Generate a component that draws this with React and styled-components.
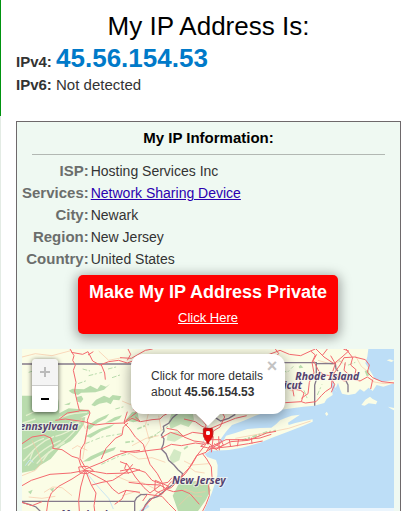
import styled, { createGlobalStyle } from "styled-components";

const details = [
  { label: "ISP:", value: "Hosting Services Inc" },
  { label: "Services:", value: "Network Sharing Device", href: "#services" },
  { label: "City:", value: "Newark" },
  { label: "Region:", value: "New Jersey" },
  { label: "Country:", value: "United States" },
];

export default function App() {
  return (
    <Page>
      <GlobalStyle />
      <Rail />
      <Content>
        <Title>My IP Address Is:</Title>
        <Address>
          <strong>IPv4:</strong> <AddressLink href="#ipv4">45.56.154.53</AddressLink>
        </Address>
        <Address>
          <strong>IPv6:</strong> Not detected
        </Address>
        <Card>
          <CardTitle>My IP Information:</CardTitle>
          <Details>
            <tbody>
              {details.map(({ label, value, href }) => (
                <tr key={label}>
                  <th scope="row">{label}</th>
                  <td>{href ? <a href={href}>{value}</a> : value}</td>
                </tr>
              ))}
            </tbody>
          </Details>
          <PrivateButton href="#private">
            <strong>Make My IP Address Private</strong>
            <span>Click Here</span>
          </PrivateButton>
          <Map>
            <MapDrawing />
            <ZoomControl>
              <ZoomButton type="button" aria-label="Zoom in" disabled>
                <svg viewBox="0 0 12 12" width="12" height="12" aria-hidden="true">
                  <path d="M6 1V11M1 6H11" stroke="currentColor" strokeWidth="2" />
                </svg>
              </ZoomButton>
              <ZoomButton type="button" aria-label="Zoom out">
                <svg viewBox="0 0 12 12" width="12" height="12" aria-hidden="true">
                  <path d="M2 6H10" stroke="currentColor" strokeWidth="2" />
                </svg>
              </ZoomButton>
            </ZoomControl>
            <Popup>
              <PopupTip />
              <PopupBody>
                Click for more details
                <br />
                about <strong>45.56.154.53</strong>
                <CloseButton type="button" aria-label="Close popup">
                  ×
                </CloseButton>
              </PopupBody>
            </Popup>
            <Attribution />
          </Map>
        </Card>
      </Content>
    </Page>
  );
}

function MapDrawing() {
  return (
    <MapSvg viewBox="0 0 1116 525" preserveAspectRatio="xMidYMin slice" aria-hidden="true">
      <defs>
        <clipPath id="land">
          <path id="mainland" d="M0 0H1039L1036 23L1030 43L1049 73L1059 91L1084 98L1116 93V103L1084 113L1064 108L1052 126L1040 116L1026 128L1014 120L1000 134L979 138L960 134L954 120L948 101L941 118L934 97L927 104L932 138L914 150L907 162L877 170L844 173L794 180L740 187L700 200L665 215L630 228L612 248L598 268L585 288L566 296L560 308L548 314L556 324L582 333L587 349L586 378L579 403L569 433L556 463L546 486L540 525H0Z" />
        </clipPath>
      </defs>
      <rect width="1116" height="525" fill="#bddef7" />

      {/* land and islands */}
      <g fill="#fbfde6">
        <use href="#mainland" />
        <path d="M568 300L590 286L604 276L612 260L640 252L676 240L714 237L748 236L762 226L774 214L790 207L809 200L834 197L818 208L798 221L800 228L820 222L846 216L872 211V218L844 230L794 250L754 265L714 281L660 296L620 303L574 305Z" />
        <path d="M1018 168L1030 152L1044 143L1052 150L1066 157L1062 166L1040 163L1028 170Z" />
        <path d="M1098 173L1116 177V184L1108 180Z" />
        <path d="M909 194L914 188L919 196L914 201Z" />
        <path d="M1094 34L1104 31L1116 35L1108 39Z" />
        <path d="M955 112L960 104L964 116L958 126Z" />
      </g>

      {/* forest */}
      <g clipPath="url(#land)" fill="#b9dcad">
        <path d="M0 140H106L110 158L112 193L140 178L176 181L204 185L202 194L176 206L154 210L190 204L186 226L166 254L146 276L118 292L98 316L86 330L56 348L38 364L0 371Z" />
        <path d="M140 125L152 119L186 121L205 110L226 121L236 107L252 113L264 105L246 122L220 130L178 131L168 138L150 133Z" />
        <path d="M222 152L246 140L262 147L272 138L298 142L292 154L274 152L266 166L254 160L232 164L218 172L208 168Z" />
        <path d="M162 145L178 140L184 150L176 161L168 158Z" />
        <path d="M126 167L146 160L142 168Z" />
        <path d="M192 234L226 210L262 194L252 208L226 222L202 242Z" />
        <path d="M190 262L232 240L278 225L264 236L238 246L206 266Z" />
        <path d="M250 221L278 205L300 199L292 209L268 220Z" />
        <path d="M182 338L206 322L246 304L282 294L276 304L238 318L202 336Z" />
        <path d="M310 214L330 190L346 188L352 216L334 220Z" />
        <path d="M448 196L474 182L512 190L516 212L500 234L476 226L446 240L440 218Z" opacity=".8" />
        <path d="M438 252L470 246L486 262L458 278L434 274Z" opacity=".6" />
        <path d="M442 326L456 300L478 310L472 334L450 344Z" opacity=".6" />
        <path d="M470 404L520 396L556 398L566 424L552 452L530 484L480 525L466 480L452 440Z" />
        <path d="M374 58L390 52L396 62L386 72Z" />
        <path d="M830 53L836 47L844 56L832 58Z" />
        <path d="M1028 66L1038 62L1044 78L1034 82Z" />
        <path d="M18 428L32 422L26 436Z" />
        <path d="M84 420L96 416L92 430Z" />
      </g>
      <g fill="none" stroke="#e5f1cf" strokeWidth="4">
        <path d="M4 336C26 316 44 282 96 262" />
        <path d="M18 350C36 326 58 300 116 274" />
        <path d="M44 344C60 322 82 306 128 280" />
        <path d="M80 312C100 290 138 276 162 240" />
        <path d="M4 300C26 290 40 276 66 268" />
        <path d="M12 200C38 188 60 174 96 166M2 222L40 210" />
        <path d="M96 240C126 240 154 226 180 214" />
        <path d="M100 262C126 256 154 240 176 224" />
        <path d="M112 206C140 196 154 192 196 190" />
        <path d="M24 330L34 304M62 336L82 308" />
      </g>
      <g fill="none" stroke="#b9dcad" strokeWidth="3" strokeDasharray="14 5 6 8">
        <path d="M200 80L240 70M270 86L300 76M168 104L196 94M280 180L310 172" />
        <path d="M190 284L240 264L300 254M326 164L344 150" />
        <path d="M238 346L290 322L330 312M404 254L438 232" />
        <path d="M400 60L434 46M754 80L776 62L796 70L814 52M862 94L878 66M886 138L900 106" />
        <path d="M950 34L974 50L1000 40M1000 76L1012 96M846 124L858 154" />
        <path d="M660 274L734 250L762 245" strokeWidth="6" />
        <path d="M20 70L46 62M60 92L88 84M30 112L70 104M182 60L204 66M258 60L290 52" />
        <path d="M346 240L380 226M380 268L406 256M310 280L340 276M486 300L500 290" strokeWidth="5" />
      </g>
      <g fill="none" stroke="#c9e5f3" strokeWidth="3">
        <path d="M188 364L212 394L236 422L260 448L274 480" />
        <path d="M380 470L356 486L340 525" strokeWidth="8" />
        <path d="M10 350L24 332L34 340" />
        <path d="M538 292L548 270L560 224" />
        <path d="M934 97L936 120L944 128" />
      </g>

      {/* secondary roads */}
      <g fill="none" stroke="#f7c5a4" strokeWidth="2">
        <path d="M0 380L40 364L60 340L48 310L30 274M66 430L92 414L120 416L150 440" />
        <path d="M196 304L166 290L150 300M196 240L190 280L182 330M20 444L60 448L100 442" />
        <path d="M280 380L318 396L360 400L400 420M300 440L340 428L370 440" />
        <path d="M330 290L372 268L410 260M320 312L350 330L390 326L430 340" />
        <path d="M382 182L370 230L382 274L360 310M410 200L418 246" />
        <path d="M498 352L520 368L548 372M500 390L540 410L560 392M486 420L520 432L550 428" />
        <path d="M470 470L500 440L540 442M486 336L510 348L560 344M640 268L740 250L800 238L866 216" />
        <path d="M744 130L776 110L810 126L840 100M888 34L930 46L962 34M1000 20L1018 52L1040 70" />
        <path d="M0 24L40 14L90 20L150 4M230 6L260 34L300 26M176 204L190 240" />
        <path d="M1052 98L1086 104L1116 101M300 156L352 178" />
      </g>

      {/* state borders */}
      <g fill="none" stroke="#857a8b" strokeWidth="4">
        <path d="M0 45H370M0 457H338" />
        <path d="M0 460L24 467L42 474L58 490M338 457L344 446L356 437L376 436M338 457V525" />
        <path d="M468 193L452 206L440 223L424 232L426 246L418 258L426 270L424 286L418 300L432 314L440 334L456 348L468 362L482 374L476 392L450 408L430 424L408 442L384 450L370 468L360 490" />
        <path d="M560 193L580 206L596 216L620 208L640 196" />
        <path d="M780 41H883V92L878 108V170M883 44L940 43L942 60L948 66M970 92L978 108V130" />
      </g>

      {/* motorways */}
      <g fill="none" stroke="#f4696e" strokeWidth="3" strokeLinejoin="round">
        <path d="M144 0L156 20L152 34L160 48L154 64L162 100L158 126L166 160L172 184L200 184L204 192L196 214L198 226L194 250L188 282L176 302L174 328L190 356" />
        <path d="M148 10L182 16L198 8L212 36L234 48L260 38L290 34L316 42L354 28" />
        <path d="M198 18L214 8M316 34L326 16L318 0M238 48L248 72L250 92" />
        <path d="M100 214L130 210L186 218L220 228L252 224L306 222L330 208L354 218" />
        <path d="M112 210L136 192L172 186M0 284L30 264L66 258L88 268" />
        <path d="M86 266L94 290L92 298L120 302L150 322L170 328L176 348L186 362" />
        <path d="M186 362L240 340L280 320L318 308L354 304" />
        <path d="M0 410L28 394L84 376L146 372L190 364L220 368L254 374L318 372L354 362" />
        <path d="M190 364L150 390L110 412L88 432L78 458L74 486" />
        <path d="M190 364L176 414L170 454L172 486" />
        <path d="M190 364L208 408L222 432L216 470L220 500" />
        <path d="M190 364L224 382L254 398L272 420L290 434L312 424L354 430" />
        <path d="M170 354L196 352L214 364L196 374L174 372Z" />
        <path d="M210 408L240 400L272 394L316 366L332 346M312 424L300 450L278 466" />
        <path d="M238 330L252 298L280 268L300 258L304 234L318 222" />
        <path d="M314 342L308 358L320 374M0 460L30 470L60 458" />
        <path d="M294 26L328 28L370 4L392 0M316 188L306 220L326 204L344 190L334 180" />
        <path d="M306 222L322 238L340 264L364 286L370 306L384 346L406 374L420 400L428 426" />
        <path d="M340 204L356 218L390 212L414 210L424 200L458 182" />
        <path d="M294 306L340 310L384 304L418 300L448 286L478 290L520 282L548 286" />
        <path d="M434 238L466 244L486 264L516 276L548 280" />
        <path d="M418 266L446 250L482 262L512 250L544 254" />
        <path d="M294 366L334 358L370 370L390 394L416 404L438 400L450 386" />
        <path d="M294 338L316 346L340 384L366 416L384 432L416 408" />
        <path d="M320 400L370 406L414 408L434 420L448 416L464 400L490 374L510 346L526 318L548 290L564 270" />
        <path d="M564 290L552 310L524 320L502 356L476 384L446 400L430 420L408 430L380 460L354 490" />
        <path d="M400 394L440 412L420 436L398 424Z" />
        <path d="M540 312L554 330L568 354L570 386L560 410L562 440L552 466L540 490" />
        <path d="M430 420L454 428L480 424L504 434L532 466" />
        <path d="M362 456L376 436L420 442L440 464L462 486" />
        <path d="M570 272L574 246L594 234L608 204L600 190M560 282L548 260L552 228L526 194" />
        <path d="M486 210L520 218L540 232L562 240L600 224L640 208L674 200" />
        <path d="M576 284L594 294L626 278L680 274L734 252L762 247" />
        <path d="M564 294L612 272L668 272L714 267L748 256" />
        <path d="M574 298L630 292L680 284L722 276M622 272L626 294M650 270L646 292M688 266L690 284" />
        <path d="M536 292L566 272L596 272L604 288L584 300L556 296L536 292" />
        <path d="M546 270L586 304M574 262L568 310M552 308L598 280M590 262L592 304" />
        <path d="M704 22L742 16L774 4L802 16L836 20L866 6L880 0" />
        <path d="M746 38L770 14L760 0M866 6L880 18L870 40L876 72L862 100L858 134L838 148" />
        <path d="M790 161L838 158L850 162L882 158L898 140L910 128L928 116L930 92L938 70" />
        <path d="M838 158L846 132L836 124L812 120L816 142M882 0L906 24L936 44L960 24L980 6L964 0" />
        <path d="M884 16L874 34L890 66L908 78L926 80" />
        <path d="M938 70L954 48L966 26L998 24L1030 32L1042 48L1036 70L1052 86L1080 98L1116 102" />
        <path d="M926 20L940 44L932 68L948 84L966 96L990 90L1014 96L1036 84L1054 96" />
        <path d="M972 0L992 26L986 48L1002 62L996 88M970 40L966 64L980 76M938 70L924 84L938 106L928 130" />
        <path d="M1052 92L1046 120M916 0L902 18" />
      </g>

      <g
        fontFamily="'Noto Sans', sans-serif"
        fontSize="31"
        fontWeight="700"
        fontStyle="italic"
        fill="#54426f"
        stroke="#fbfbf2"
        strokeWidth="6"
        strokeOpacity=".7"
        paintOrder="stroke"
      >
        <text x="168" y="244" textAnchor="end">Pennsylvania</text>
        <text x="450" y="406">New Jersey</text>
        <text x="820" y="93">Rhode Island</text>
        <text x="840" y="120" textAnchor="end">Connecticut</text>
        <text x="116" y="508">Maryland</text>
      </g>

      {/* marker */}
      <path d="M544 241Q544 238 547 238H569Q572 238 572 241V258C572 268 561 274 558 286C555 274 544 268 544 258Z" fill="#ea0a0a" stroke="#a80f12" strokeWidth="2" />
      <rect x="552" y="246" width="12" height="12" rx="4" fill="#fff" />
    </MapSvg>
  );
}

const GlobalStyle = createGlobalStyle`
  * {
    box-sizing: border-box;
  }
  body {
    margin: 0;
    background: #fff;
    color: #333;
    font-family: "Liberation Sans", Arial, sans-serif;
    font-size: 15px;
  }
`;

const Page = styled.main`
  display: flex;
  height: 100vh;
  overflow: hidden;
`;

const Rail = styled.div`
  flex: none;
  width: 1px;
  background: #e3ebe4;
  &::before {
    content: "";
    display: block;
    height: 116px;
    background: #00930f;
  }
`;

const Content = styled.div`
  flex: 1;
  min-width: 0;
  padding: 10px 19px 0 15px;
`;

const Title = styled.h1`
  margin: 0;
  color: #000;
  font-size: 26px;
  font-weight: 400;
  line-height: 32px;
  text-align: center;
`;

const Address = styled.p`
  margin: 0;
  line-height: 22px;
`;

const AddressLink = styled.a`
  color: #007ac9;
  font-size: 26px;
  font-weight: 700;
  line-height: 32px;
  text-decoration: none;
`;

const Card = styled.section`
  margin-top: 25px;
  padding: 5px 6px 5px 5px;
  background: #eff9f2;
  border: 1px solid #6e696b;
`;

const CardTitle = styled.h2`
  margin: 0 9px 5px 10px;
  padding-bottom: 5px;
  border-bottom: 1px solid #b2b8b3;
  color: #000;
  font-size: 15px;
  line-height: 22px;
  text-align: center;
`;

const Details = styled.table`
  border-collapse: collapse;
  line-height: 22px;
  th {
    padding: 0 2px 0 0;
    color: #6b6e6c;
    text-align: right;
  }
  td {
    padding: 0;
    font-size: 14px;
  }
  a {
    color: #2a00b0;
  }
`;

const PrivateButton = styled.a`
  display: flex;
  flex-direction: column;
  align-items: center;
  width: fit-content;
  margin: 5px auto 15px;
  padding: 5px 11px 4px;
  background: #f00;
  border-radius: 5px;
  box-shadow: 0 2px 12px 2px rgba(0, 0, 0, 0.35);
  color: #fff;
  line-height: 25px;
  text-decoration: none;
  strong {
    font-size: 18px;
  }
  span {
    font-size: 13px;
    text-decoration: underline;
  }
`;

const Map = styled.div`
  position: relative;
  height: 175px;
  overflow: hidden;
  background: #bddef7;
`;

const MapSvg = styled.svg`
  display: block;
  width: 100%;
  height: 100%;
`;

const ZoomControl = styled.div`
  position: absolute;
  top: 10px;
  left: 10px;
  border-radius: 4px;
  box-shadow: 0 1px 5px rgba(0, 0, 0, 0.65);
  overflow: hidden;
`;

const ZoomButton = styled.button`
  display: grid;
  place-items: center;
  width: 26px;
  height: 26px;
  padding: 0;
  background: #fff;
  border: 0;
  color: #000;
  &:first-child {
    height: 27px;
    border-bottom: 1px solid #ccc;
  }
  &:disabled {
    background: #f4f4f4;
    color: #bbb;
  }
`;

const Popup = styled.div`
  position: absolute;
  top: 5px;
  left: 50%;
  transform: translateX(-50%);
  width: 154px;
`;

const PopupBody = styled.div`
  position: relative;
  padding: 14px 0 14px 20px;
  background: #fff;
  border-radius: 12px;
  box-shadow: 0 3px 14px rgba(0, 0, 0, 0.4);
  font-size: 12px;
  line-height: 16px;
  white-space: nowrap;
  &::after {
    content: "";
    position: absolute;
    top: 100%;
    left: 50%;
    margin-left: -12px;
    border: 12px solid transparent;
    border-top-color: #fff;
    border-bottom: 0;
  }
`;

const PopupTip = styled.div`
  position: absolute;
  bottom: -8px;
  left: 50%;
  width: 16px;
  height: 16px;
  margin-left: -8px;
  transform: rotate(45deg);
  box-shadow: 0 3px 14px rgba(0, 0, 0, 0.4);
`;

const CloseButton = styled.button`
  position: absolute;
  top: 4px;
  right: 5px;
  width: 16px;
  height: 16px;
  padding: 0;
  background: none;
  border: 0;
  color: #c3c3c3;
  font: bold 18px/16px "Liberation Sans", Arial, sans-serif;
`;

const Attribution = styled.div`
  position: absolute;
  right: 0;
  bottom: 0;
  width: 174px;
  height: 16px;
  background: rgba(255, 255, 255, 0.7);
`;
